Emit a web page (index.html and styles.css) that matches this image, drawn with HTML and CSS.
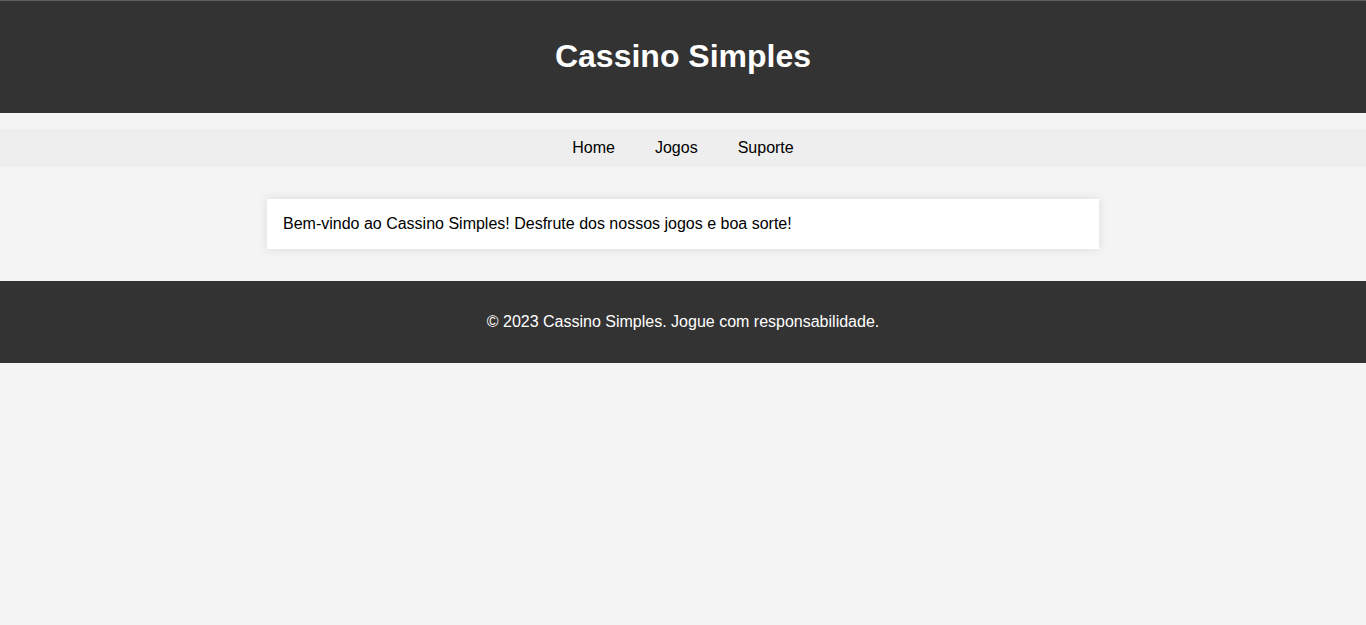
FILE: index.html
```html
<!DOCTYPE html>
<html lang="pt-BR">
<head>
<meta charset="UTF-8">
<meta name="viewport" content="width=device-width, initial-scale=1">
<title>Cassino Simples</title>
<link rel="stylesheet" href="styles.css">
</head>
<body>
<header class="site-header">
  <h1 class="site-title">Cassino Simples</h1>
</header>
<nav class="site-nav">
  <a class="nav-link" href="#home">Home</a>
  <a class="nav-link" href="#jogos">Jogos</a>
  <a class="nav-link" href="#suporte">Suporte</a>
</nav>
<main class="card">
  <p class="welcome">Bem-vindo ao Cassino Simples! Desfrute dos nossos jogos e boa sorte!</p>
</main>
<footer class="site-footer">
  <p class="copyright">© 2023 Cassino Simples. Jogue com responsabilidade.</p>
</footer>
</body>
</html>
```

FILE: styles.css
```css
body {
  margin: 0;
  background: #f4f4f4;
  color: #000;
  font-family: Arial, "Liberation Sans", sans-serif;
  font-size: 16px;
  line-height: 18px;
}

.site-header,
.site-footer {
  background: #333;
  color: #fff;
  text-align: center;
}

.site-header {
  padding: 37px 16px 38px;
  border-top: 1px solid #5f6065;
}

.site-title {
  margin: 0;
  font-size: 32px;
  line-height: 37px;
}

.site-nav {
  display: flex;
  justify-content: center;
  gap: 40px;
  margin-top: 16px;
  padding: 10px;
  background: #eee;
}

.nav-link {
  color: #000;
  text-decoration: none;
}

.card {
  max-width: 800px;
  margin: 32px auto;
  padding: 16px;
  background: #fff;
  box-shadow: 0 0 10px rgba(0, 0, 0, 0.1);
}

.welcome,
.copyright {
  margin: 0;
}

.site-footer {
  padding: 32px 16px;
}
```
